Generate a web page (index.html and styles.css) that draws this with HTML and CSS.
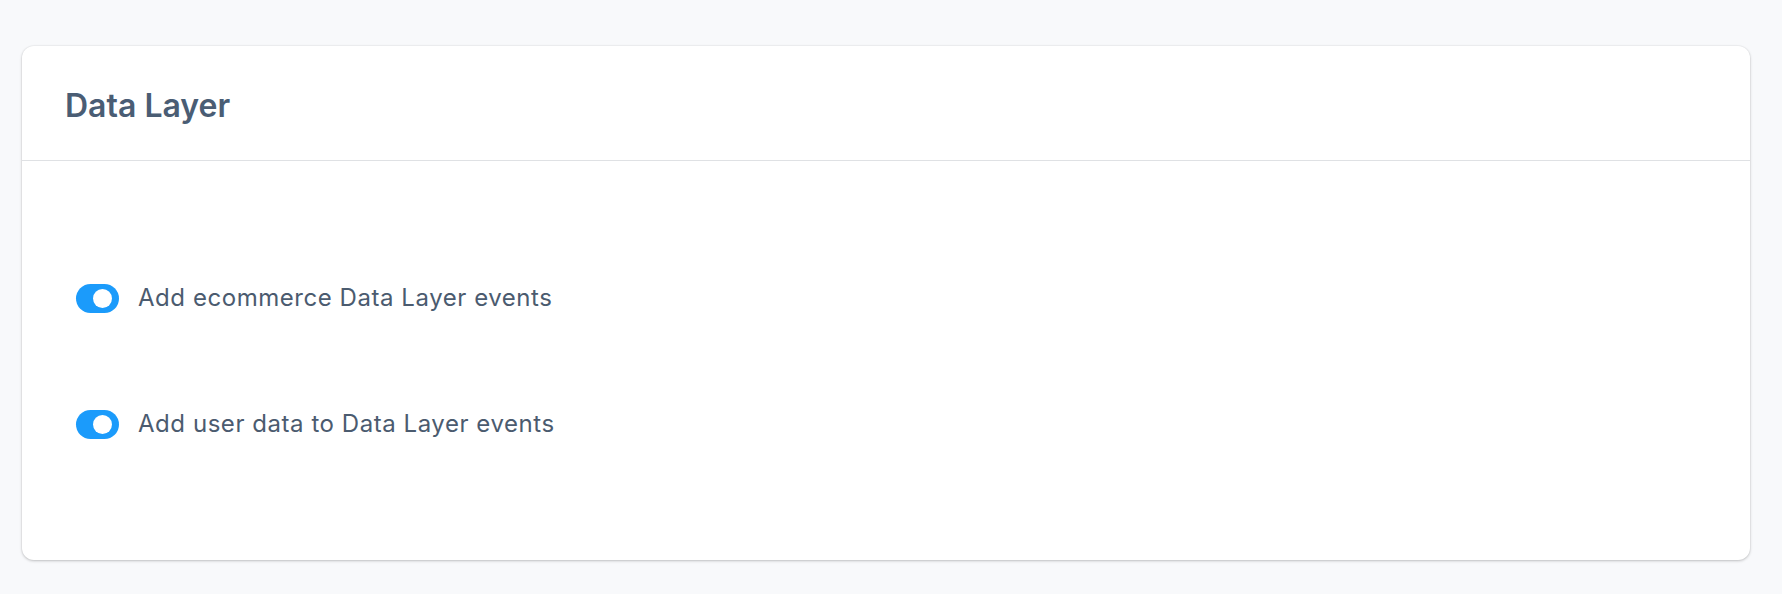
FILE: index.html
```html
<!DOCTYPE html>
<html lang="en">
<head>
<meta charset="utf-8">
<title>Data Layer</title>
<link rel="stylesheet" href="styles.css">
</head>
<body>
<div class="page">
  <section class="card">
    <header class="card-header">
      <h2 class="card-title">Data Layer</h2>
    </header>
    <div class="card-body">
      <label class="option">
        <span class="switch on"><span class="knob"></span></span>
        <span class="option-label">Add ecommerce Data Layer events</span>
      </label>
      <label class="option">
        <span class="switch on"><span class="knob"></span></span>
        <span class="option-label">Add user data to Data Layer events</span>
      </label>
    </div>
  </section>
</div>
</body>
</html>
```

FILE: styles.css
```css
* { box-sizing: border-box; }
html, body {
  margin: 0;
  padding: 0;
  background: #f8f9fb;
  font-family: Inter, "Noto Sans", "Liberation Sans", sans-serif;
}
.page {
  padding: 46px 32px 34px 22px;
}
.card {
  background: #ffffff;
  border-radius: 12px;
  box-shadow: 0 1px 3px rgba(0, 0, 0, 0.22), 0 0 0 1px rgba(0, 0, 0, 0.025);
}
.card-header {
  padding: 42px 43px 36px;
  border-bottom: 1px solid #dfe1e4;
}
.card-title {
  margin: 0;
  font-size: 32px;
  line-height: 36px;
  font-weight: 600;
  color: #4a5d74;
}
.card-body {
  padding: 119px 54px 118px;
  display: flex;
  flex-direction: column;
  gap: 90px;
}
.option {
  display: flex;
  align-items: center;
  gap: 19px;
  height: 36px;
}
.switch {
  width: 43px;
  height: 29px;
  border-radius: 15px;
  background: #1b9bfb;
  display: flex;
  align-items: center;
  justify-content: flex-end;
  padding-right: 7px;
  flex: none;
}
.knob {
  width: 19px;
  height: 19px;
  border-radius: 50%;
  background: #ffffff;
}
.option-label {
  font-size: 24px;
  line-height: 36px;
  letter-spacing: 0.55px;
  color: #4b5b6f;
}
```
